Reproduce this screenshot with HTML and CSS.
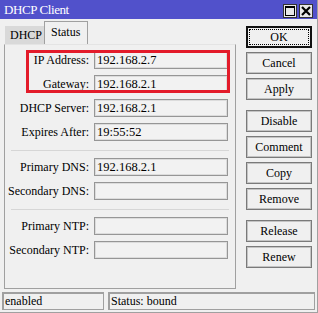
FILE: index.html
```html
<!DOCTYPE html>
<html lang="en">
<head>
    <meta charset="UTF-8">
    <title>DHCP Client</title>
    <link rel="stylesheet" href="styles.css">
</head>
<body>
    <div class="window">
        <div class="titlebar">
            <span class="title">DHCP Client</span>
            <div class="win-buttons">
                <span class="win-btn">
                    <svg width="10" height="10" viewBox="0 0 10 10"><rect x="0.5" y="0.5" width="9" height="9" fill="none" stroke="#000"/><rect x="0" y="0" width="10" height="2" fill="#000"/></svg>
                </span>
                <span class="win-btn">
                    <svg width="10" height="10" viewBox="0 0 10 10"><path d="M1 1 L9 9 M9 1 L1 9" stroke="#000" stroke-width="2.2"/></svg>
                </span>
            </div>
        </div>

        <div class="content">
            <div class="left">
                <div class="tabs">
                    <div class="tab">DHCP</div>
                    <div class="tab active">Status</div>
                </div>
                <div class="panel">
                    <div class="group">
                        <div class="row"><label>IP Address:</label><div class="field">192.168.2.7</div></div>
                        <div class="row"><label>Gateway:</label><div class="field">192.168.2.1</div></div>
                        <div class="row"><label>DHCP Server:</label><div class="field">192.168.2.1</div></div>
                        <div class="row"><label>Expires After:</label><div class="field">19:55:52</div></div>
                    </div>
                    <div class="separator"></div>
                    <div class="group">
                        <div class="row"><label>Primary DNS:</label><div class="field">192.168.2.1</div></div>
                        <div class="row"><label>Secondary DNS:</label><div class="field"></div></div>
                    </div>
                    <div class="separator"></div>
                    <div class="group">
                        <div class="row"><label>Primary NTP:</label><div class="field"></div></div>
                        <div class="row"><label>Secondary NTP:</label><div class="field"></div></div>
                    </div>
                </div>
            </div>

            <div class="buttons">
                <div class="btn-group">
                    <button class="btn default">OK</button>
                    <button class="btn">Cancel</button>
                    <button class="btn">Apply</button>
                </div>
                <div class="btn-group">
                    <button class="btn">Disable</button>
                    <button class="btn">Comment</button>
                    <button class="btn">Copy</button>
                    <button class="btn">Remove</button>
                </div>
                <div class="btn-group">
                    <button class="btn">Release</button>
                    <button class="btn">Renew</button>
                </div>
            </div>
        </div>

        <div class="statusbar">
            <div class="status-cell first">enabled</div>
            <div class="status-cell second">Status: bound</div>
        </div>

        <!-- annotation box drawn over the first two fields -->
        <div class="highlight"></div>
    </div>
</body>
</html>
```

FILE: styles.css
```css
body {
    margin: 0;
    font-family: "Liberation Serif", "Times New Roman", serif;
    font-size: 12px;
    color: #000;
}
.window {
    position: relative;
    width: 317px;
    height: 312px;
    background-color: #f0f0f0;
    border-right: 1px solid #a0a0a0;
    border-bottom: 1px solid #a0a0a0;
}
.titlebar {
    height: 19px;
    background-color: #5151cb;
    display: flex;
    align-items: center;
    padding-left: 4px;
}
.title {
    color: #fff;
    font-size: 13px;
    letter-spacing: -0.4px;
    margin-top: 1px;
}
.win-buttons {
    margin-left: auto;
    display: flex;
    gap: 2px;
    padding-right: 4px;
    margin-top: 2px;
}
.win-btn {
    width: 14px;
    height: 14px;
    box-sizing: border-box;
    border: 1px solid #333;
    background-color: #e8e8e8;
    display: flex;
    align-items: center;
    justify-content: center;
}
.content {
    display: flex;
    padding: 3px 0 0 4px;
    gap: 10px;
}
.left {
    width: 232px;
}
.tabs {
    display: flex;
    align-items: flex-end;
    height: 22px;
    padding-left: 1px;
}
.tab {
    height: 18px;
    line-height: 18px;
    padding: 0 5px;
    width: 29px;
    background-color: #d9d9d9;
}
.tab.active {
    height: 22px;
    line-height: 20px;
    width: 31px;
    padding: 0 5px 0 6px;
    background-color: #f0f0f0;
    border: 1px solid #a0a0a0;
    border-bottom: none;
    box-sizing: content-box;
}
.panel {
    height: 237px;
    border: 1px solid #a0a0a0;
    border-top-color: #e4e4e4;
    padding: 6px 6px 0 0;
}
.group {
    display: flex;
    flex-direction: column;
    gap: 6px;
}
.row {
    display: grid;
    grid-template-columns: 84px 134px;
    column-gap: 5px;
    align-items: center;
}
.row label {
    text-align: right;
    white-space: nowrap;
}
.field {
    height: 18px;
    box-sizing: border-box;
    border: 1px solid #969696;
    box-shadow: inset 0 0 0 1px #dcdcdc;
    background-color: #f2f2f2;
    padding-left: 2px;
    line-height: 16px;
    font-size: 12.5px;
}
.separator {
    height: 1px;
    background-color: #d6d6d6;
    margin: 9px 0 7px 6px;
}
.buttons {
    display: flex;
    flex-direction: column;
    gap: 10px;
    margin-top: 4px;
}
.btn-group {
    display: flex;
    flex-direction: column;
    gap: 4px;
}
.btn {
    position: relative;
    width: 66px;
    height: 22px;
    padding: 0;
    font-family: "Liberation Serif", "Times New Roman", serif;
    font-size: 12px;
    color: #000;
    background-color: #f0f0f0;
    border: 1px solid #7a7a7a;
    box-shadow: inset 0 0 0 1px #c4c4c4;
}
.btn.default {
    border: 2px solid #111;
    box-shadow: none;
}
.btn.default::after {
    content: "";
    position: absolute;
    top: 1px;
    left: 1px;
    right: 1px;
    bottom: 1px;
    border: 1px dotted #000;
}
.statusbar {
    display: flex;
    gap: 4px;
    padding: 3px 0 0 2px;
}
.status-cell {
    height: 18px;
    box-sizing: border-box;
    border: 1px solid #a0a0a0;
    border-top-width: 2px;
    border-left-width: 2px;
    padding-left: 1px;
    line-height: 15px;
}
.status-cell.first {
    width: 102px;
}
.status-cell.second {
    width: 207px;
}
.highlight {
    position: absolute;
    left: 26px;
    top: 50px;
    width: 198px;
    height: 37px;
    border: 3px solid #e31b2a;
}
```
